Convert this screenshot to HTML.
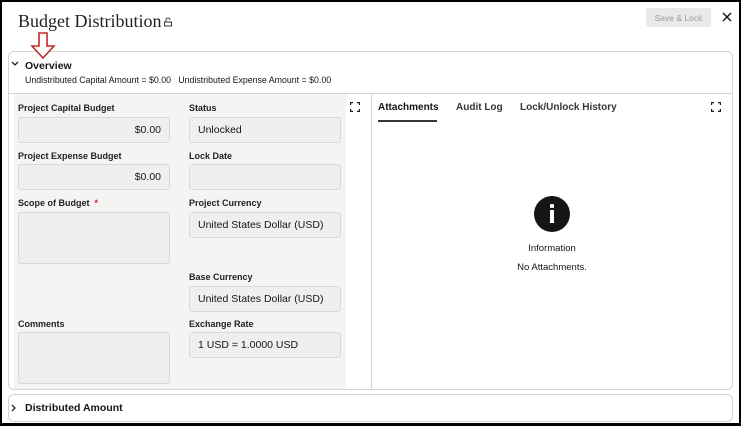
<!DOCTYPE html>
<html><head><style>
*{box-sizing:border-box;margin:0;padding:0}
body{width:741px;height:426px;background:#fff;position:relative;overflow:hidden;font-family:"Liberation Sans",sans-serif;color:#161513}
.a{position:absolute}
.frame{left:0;top:0;width:741px;height:426px;border:2px solid #000;border-bottom-width:3px;z-index:10;pointer-events:none}
.lbl{font-size:9px;font-weight:bold;color:#222}
.inp{background:#f1efed;border:1px solid #dcd9d5;border-radius:3px;font-size:10.5px;color:#161513;padding:0 8px;display:flex;align-items:center}
.fs{width:10px;height:10px}
</style></head><body>
<div class="a frame"></div>
<div class="a" style="left:18px;top:11px;font-family:'Liberation Serif',serif;font-size:18px;color:#222;white-space:nowrap">Budget Distribution</div>
<svg class="a" style="left:163px;top:17px" width="10" height="10" viewBox="0 0 10 10"><path d="M3 5V3a2 2 0 0 1 4 0" fill="none" stroke="#333" stroke-width="1"/><rect x="1.5" y="5" width="7" height="4" fill="none" stroke="#333" stroke-width="1"/></svg>
<div class="a" style="left:646px;top:8px;width:65px;height:19px;background:#ebe9e7;border-radius:2px;font-size:8.5px;color:#999;display:flex;align-items:center;justify-content:center">Save &amp; Lock</div>
<svg class="a" style="left:722px;top:12px" width="10" height="10" viewBox="0 0 10 10"><path d="M1 1l8 8M9 1l-8 8" stroke="#111" stroke-width="1.4"/></svg>
<div class="a" style="left:8px;top:51px;width:725px;height:339px;border:1px solid #d6d4d1;border-radius:6px"></div>
<svg class="a" style="left:30px;top:32px" width="28" height="28" viewBox="0 0 28 28"><path d="M9 1h8v13h7L13 26 2 14h7z" fill="#fff" stroke="#c0282a" stroke-width="1.6"/></svg>
<svg class="a" style="left:11px;top:61px" width="8" height="6"><path d="M1 1l3 3 3-3" fill="none" stroke="#222" stroke-width="1.3"/></svg>
<div class="a" style="left:25px;top:60px;font-size:10.5px;font-weight:bold">Overview</div>
<div class="a" style="left:25px;top:75px;font-size:8.8px;white-space:nowrap">Undistributed Capital Amount = $0.00&nbsp;&nbsp;&nbsp;Undistributed Expense Amount = $0.00</div>
<div class="a" style="left:9px;top:93px;width:723px;border-top:1px solid #d6d4d1"></div>
<div class="a" style="left:14px;top:94px;width:332px;height:295px;background:#f5f4f2"></div>
<div class="a" style="left:371px;top:94px;height:295px;border-left:1px solid #d6d4d1"></div>

<div class="a lbl" style="left:18px;top:103px">Project Capital Budget</div>
<div class="a inp" style="left:18px;top:117px;width:152px;height:26px;justify-content:flex-end">$0.00</div>
<div class="a lbl" style="left:189px;top:103px">Status</div>
<div class="a inp" style="left:189px;top:117px;width:152px;height:26px">Unlocked</div>
<div class="a lbl" style="left:18px;top:151px">Project Expense Budget</div>
<div class="a inp" style="left:18px;top:164px;width:152px;height:26px;justify-content:flex-end">$0.00</div>
<div class="a lbl" style="left:189px;top:151px">Lock Date</div>
<div class="a inp" style="left:189px;top:164px;width:152px;height:26px"></div>
<div class="a lbl" style="left:18px;top:198px">Scope of Budget <span style="color:#c0282a">&nbsp;*</span></div>
<div class="a inp" style="left:18px;top:212px;width:152px;height:52px"></div>
<div class="a lbl" style="left:189px;top:198px">Project Currency</div>
<div class="a inp" style="left:189px;top:212px;width:152px;height:26px">United States Dollar (USD)</div>
<div class="a lbl" style="left:189px;top:272px">Base Currency</div>
<div class="a inp" style="left:189px;top:286px;width:152px;height:26px">United States Dollar (USD)</div>
<div class="a lbl" style="left:18px;top:319px">Comments</div>
<div class="a inp" style="left:18px;top:332px;width:152px;height:52px"></div>
<div class="a lbl" style="left:189px;top:319px">Exchange Rate</div>
<div class="a inp" style="left:189px;top:332px;width:152px;height:26px">1 USD = 1.0000 USD</div>

<svg class="a fs" style="left:350px;top:102px" viewBox="0 0 10 10"><path d="M0.5 3V0.5H3M7 0.5H9.5V3M9.5 7V9.5H7M3 9.5H0.5V7" fill="none" stroke="#222" stroke-width="1.4"/></svg>
<svg class="a fs" style="left:711px;top:102px" viewBox="0 0 10 10"><path d="M0.5 3V0.5H3M7 0.5H9.5V3M9.5 7V9.5H7M3 9.5H0.5V7" fill="none" stroke="#222" stroke-width="1.4"/></svg>

<div class="a" style="left:378px;top:102px;font-size:10px;font-weight:bold">Attachments</div>
<div class="a" style="left:378px;top:120px;width:59px;border-top:2px solid #3a3631"></div>
<div class="a" style="left:456px;top:102px;font-size:10px;font-weight:bold;color:#3a3631">Audit Log</div>
<div class="a" style="left:520px;top:102px;font-size:10px;font-weight:bold;color:#3a3631">Lock/Unlock History</div>

<div class="a" style="left:534px;top:196px;width:36px;height:36px;border-radius:50%;background:#161513"></div>
<div class="a" style="left:550px;top:204px;width:4px;height:4px;background:#fff;border-radius:1px"></div>
<div class="a" style="left:550px;top:210px;width:4px;height:13px;background:#fff"></div>
<div class="a" style="left:480px;top:243px;width:144px;text-align:center;font-size:9.5px">Information</div>
<div class="a" style="left:480px;top:262px;width:144px;text-align:center;font-size:9.5px">No Attachments.</div>

<div class="a" style="left:8px;top:394px;width:725px;height:28px;border:1px solid #d6d4d1;border-radius:6px"></div>
<svg class="a" style="left:11px;top:404px" width="6" height="8"><path d="M1 1l3 3-3 3" fill="none" stroke="#222" stroke-width="1.3"/></svg>
<div class="a" style="left:25px;top:402px;font-size:10.5px;font-weight:bold">Distributed Amount</div>
</body></html>
